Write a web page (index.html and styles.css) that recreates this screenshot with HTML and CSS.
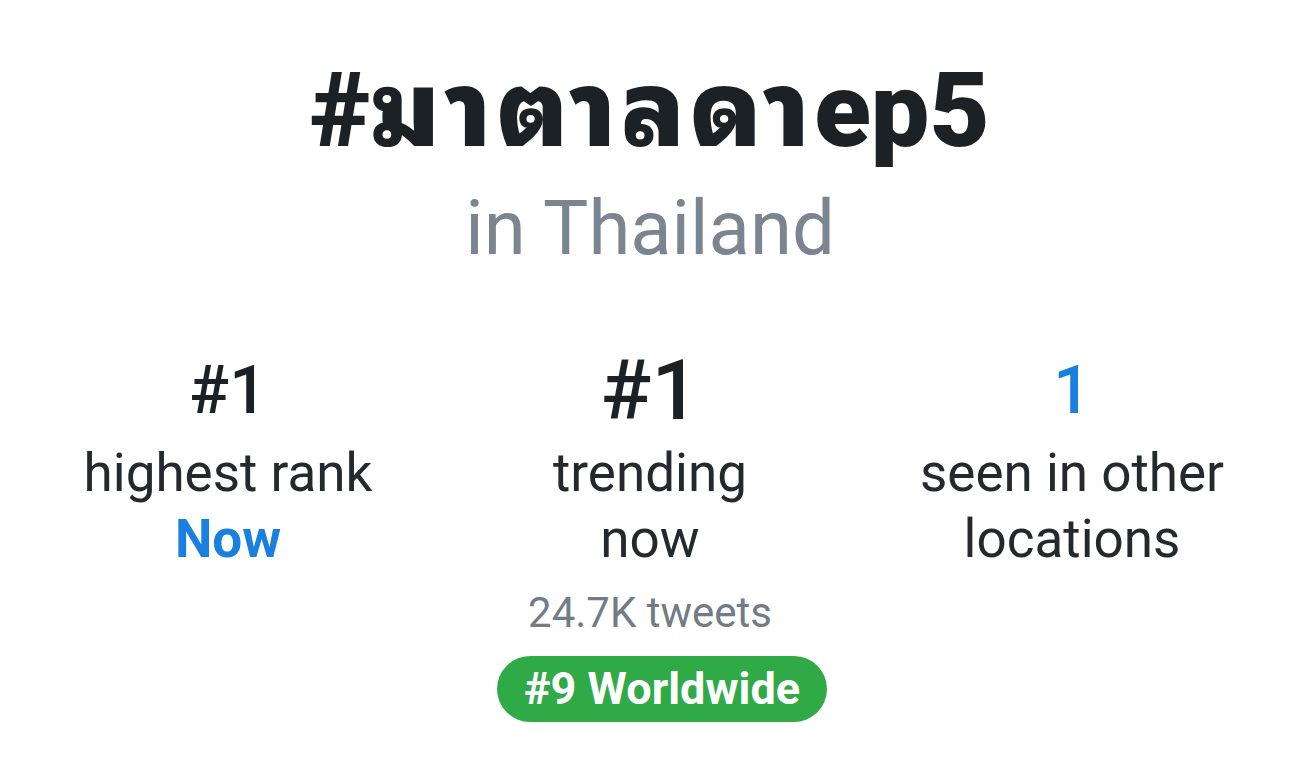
FILE: index.html
```html
<!DOCTYPE html>
<html lang='en'>

<head>
  <meta charset='UTF-8'>
  <meta name='viewport' content='width=device-width, initial-scale=1.0'>
  <title>Trend</title>
  <link rel="stylesheet" href="styles.css">
</head>

<body>
  <div class='trend'>
    <div class='trend-name'>#<span class='thai'>มาตาลดา</span>ep5</div>
    <div class='trend-place'>in Thailand</div>

    <div class='stats'>
      <div class='stat'>
        <div class='stat-num small'>#1</div>
        <div class='stat-label'>highest rank</div>
        <div class='stat-label blue bold'>Now</div>
      </div>
      <div class='stat'>
        <div class='stat-num big'>#1</div>
        <div class='stat-label'>trending<br>now</div>
        <div class='tweets'>24.7K tweets</div>
        <div class='pill'>#9 Worldwide</div>
      </div>
      <div class='stat'>
        <div class='stat-num small blue'>1</div>
        <div class='stat-label'>seen in other<br>locations</div>
      </div>
    </div>
  </div>
</body>

</html>
```

FILE: styles.css
```css
html {
  width: 100%;
  height: 100%;
  margin: 0;
}

body {
  width: 100%;
  height: 100%;
  margin: 0;
  background-color: #ffffff;
  font-family: Roboto, "Noto Sans Thai Looped", Loma, Garuda, "Noto Sans", "Noto Sans Thai", "DejaVu Sans", sans-serif;
  color: #25292d;
}

.trend {
  display: flex;
  flex-direction: column;
  align-items: center;
  padding-top: 55px;
}

.trend-name {
  font-size: 104px;
  font-weight: 900;
  line-height: 112px;
  color: #1c2125;
}

.trend-name .thai {
  letter-spacing: 4px;
}

.trend-place {
  font-size: 76px;
  line-height: 90px;
  color: #7b858f;
  margin-top: 16px;
}

.stats {
  display: grid;
  grid-template-columns: repeat(3, 422px);
  justify-content: center;
  margin-top: 80px;
  width: 100%;
}

.stat {
  display: flex;
  flex-direction: column;
  align-items: center;
  text-align: center;
}

.stat-num {
  height: 76px;
  line-height: 76px;
  margin-bottom: 11px;
  font-weight: 500;
  color: #1c2125;
}

.stat-num.small {
  font-size: 66px;
}

.stat-num.big {
  font-size: 84px;
}

.stat-label {
  font-size: 53px;
  line-height: 66px;
}

.blue {
  color: #1a80e0;
}

.bold {
  font-weight: bold;
}

.stat-num.blue {
  color: #1a80e0;
}

.tweets {
  font-size: 42px;
  line-height: 54px;
  color: #727c86;
  margin-top: 14px;
}

.pill {
  margin-top: 16px;
  margin-left: 24px;
  background-color: #2faa47;
  color: #ffffff;
  font-size: 45px;
  font-weight: bold;
  line-height: 66px;
  padding: 0 27px;
  border-radius: 33px;
}
```
